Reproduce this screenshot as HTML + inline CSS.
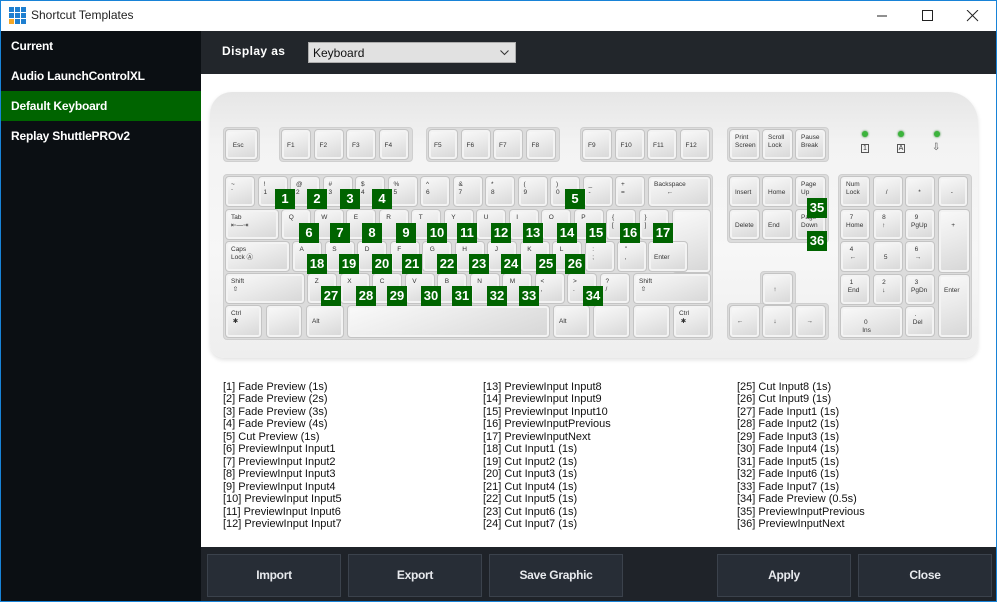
<!DOCTYPE html>
<html><head><meta charset="utf-8"><style>
*{margin:0;padding:0;box-sizing:border-box}
body{width:997px;height:602px;overflow:hidden;position:relative;font-family:"Liberation Sans",Arial,sans-serif;background:#fff}
.abs{position:absolute}
#win{position:absolute;left:0;top:0;width:997px;height:602px;border:1px solid #1883d7;pointer-events:none;z-index:50}
#title{left:0;top:0;width:997px;height:31px;background:#fff}
#side{left:0;top:31px;width:201px;height:571px;background:#0b0f13}
.si{position:absolute;left:0;width:201px;height:30px;color:#fff;font-weight:bold;font-size:12px;line-height:30px;padding-left:11px;letter-spacing:-0.2px}
#topbar{left:201px;top:31px;width:796px;height:43px;background:#22262b}
#content{left:201px;top:74px;width:796px;height:473px;background:#fff}
#bottom{left:201px;top:547px;width:796px;height:55px;background:#1f2329}
.btn{position:absolute;top:554px;width:134px;height:43px;background:#272d36;border:1px solid #3b424c;color:#e8eaee;font-weight:bold;font-size:12px;text-align:center;line-height:41px;letter-spacing:-0.3px}
#kb{left:210px;top:92px;width:768px;height:266px;border-radius:22px 30px 14px 14px;background:linear-gradient(#e6e6e6 0%,#f3f3f3 20%,#f7f7f7 60%,#eeeeee 100%);box-shadow:0 2px 4px rgba(0,0,0,.12)}
.grp{position:absolute;background:#dcdcdc;border-radius:4px;border:1px solid #cfcfcf}
.k{position:absolute;border-radius:4px;background:linear-gradient(160deg,#fafafa 0%,#ebebeb 45%,#d6d6d6 100%);border:1px solid #c4c4c4;box-shadow:inset 0 0 0 2px #f3f3f3;font-size:6.5px;color:#333;padding:4px 0 0 5px;line-height:8px;white-space:pre}
.n{position:absolute;width:20px;height:20px;background:#006400;color:#fff;font-weight:bold;font-size:13px;text-align:center;line-height:20px;z-index:5}
.list{position:absolute;top:381px;font-size:11px;line-height:12.45px;color:#111;white-space:pre}
.led{position:absolute;width:6px;height:6px;border-radius:50%;background:#3cb43c;box-shadow:0 0 2px #1a7a1a}
</style></head><body>
<div id="win"></div>
<div id="title" class="abs">
 <svg class="abs" style="left:9px;top:7px" width="17" height="17">
  <rect x="0" y="0" width="5" height="5" fill="#1e7fd0"/><rect x="6" y="0" width="5" height="5" fill="#1e7fd0"/><rect x="12" y="0" width="5" height="5" fill="#1e7fd0"/>
  <rect x="0" y="6" width="5" height="5" fill="#1e7fd0"/><rect x="6" y="6" width="5" height="5" fill="#1e7fd0"/><rect x="12" y="6" width="5" height="5" fill="#1e7fd0"/>
  <rect x="0" y="12" width="5" height="5" fill="#f5a623"/><rect x="6" y="12" width="5" height="5" fill="#1e7fd0"/><rect x="12" y="12" width="5" height="5" fill="#1e7fd0"/>
 </svg>
 <div class="abs" style="left:31px;top:8px;font-size:12px;color:#222">Shortcut Templates</div>
 <svg class="abs" style="left:877px;top:10px" width="110" height="12">
  <line x1="0" y1="6" x2="10" y2="6" stroke="#222"/>
  <rect x="45.5" y="0.5" width="10" height="10" fill="none" stroke="#222"/>
  <line x1="90" y1="0" x2="101" y2="11" stroke="#222"/><line x1="101" y1="0" x2="90" y2="11" stroke="#222"/>
 </svg>
</div>
<div id="side" class="abs">
 <div class="si" style="top:0">Current</div>
 <div class="si" style="top:30px">Audio LaunchControlXL</div>
 <div class="si" style="top:60px;background:#006400">Default Keyboard</div>
 <div class="si" style="top:90px">Replay ShuttlePROv2</div>
</div>
<div id="topbar" class="abs">
 <div class="abs" style="left:21px;top:13px;color:#fff;font-weight:bold;font-size:12px;letter-spacing:0.4px">Display as</div>
 <div class="abs" style="left:107px;top:11px;width:208px;height:21px;background:#e1e1e1;border:1px solid #adadad;font-size:12px;color:#111;padding:3px 0 0 4px">Keyboard
  <svg class="abs" style="right:6px;top:7px" width="9" height="6"><polyline points="0.5,0.5 4.5,4.5 8.5,0.5" fill="none" stroke="#333"/></svg></div>
</div>
<div id="content" class="abs"></div>
<div id="kb" class="abs"></div>
<div id="keys"></div>
<div class="led" style="left:862px;top:131px"></div><div class="led" style="left:898px;top:131px"></div><div class="led" style="left:934px;top:131px"></div>
<div class="abs" style="left:861px;top:144px;width:8px;height:9px;border:1px solid #555;font-size:7px;line-height:7px;text-align:center;color:#333">1</div>
<div class="abs" style="left:897px;top:144px;width:8px;height:9px;border:1px solid #555;font-size:7px;line-height:7px;text-align:center;color:#333">A</div>
<div class="abs" style="left:932px;top:142px;font-size:10px;color:#555">⇩</div>

<div class="list" style="left:223px">[1] Fade Preview (1s)
[2] Fade Preview (2s)
[3] Fade Preview (3s)
[4] Fade Preview (4s)
[5] Cut Preview (1s)
[6] PreviewInput Input1
[7] PreviewInput Input2
[8] PreviewInput Input3
[9] PreviewInput Input4
[10] PreviewInput Input5
[11] PreviewInput Input6
[12] PreviewInput Input7</div>
<div class="list" style="left:483px">[13] PreviewInput Input8
[14] PreviewInput Input9
[15] PreviewInput Input10
[16] PreviewInputPrevious
[17] PreviewInputNext
[18] Cut Input1 (1s)
[19] Cut Input2 (1s)
[20] Cut Input3 (1s)
[21] Cut Input4 (1s)
[22] Cut Input5 (1s)
[23] Cut Input6 (1s)
[24] Cut Input7 (1s)</div>
<div class="list" style="left:737px">[25] Cut Input8 (1s)
[26] Cut Input9 (1s)
[27] Fade Input1 (1s)
[28] Fade Input2 (1s)
[29] Fade Input3 (1s)
[30] Fade Input4 (1s)
[31] Fade Input5 (1s)
[32] Fade Input6 (1s)
[33] Fade Input7 (1s)
[34] Fade Preview (0.5s)
[35] PreviewInputPrevious
[36] PreviewInputNext</div>

<div id="bottom" class="abs"></div>
<div class="btn" style="left:207px">Import</div>
<div class="btn" style="left:348px">Export</div>
<div class="btn" style="left:489px">Save Graphic</div>
<div class="btn" style="left:717px">Apply</div>
<div class="btn" style="left:858px">Close</div>

<script>
var K=document.getElementById('keys'),h='';
function g(x,y,w,hh){h+='<div class="grp" style="left:'+(x-2)+'px;top:'+(y-2)+'px;width:'+(w+4)+'px;height:'+(hh+4)+'px"></div>';}
function k(x,y,w,hh,t,st){h+='<div class="k" style="left:'+x+'px;top:'+y+'px;width:'+w+'px;height:'+hh+'px;'+(st||'')+'">'+(t||'')+'</div>';}
var U=32.5,W=30,H=31;
// groups
g(225,129,33,H);g(281,129,130,H);g(428,129,130,H);g(582,129,129,H);
g(225,176,486,162);g(729,129,98,H);g(729,176,98,65);g(762,273,32,32);g(729,305,98,33);g(840,176,130,162);
k(225,129,33,H,'\n Esc');
['F1','F2','F3','F4'].forEach(function(t,i){k(281+i*U,129,W,H,'\n'+t)});
['F5','F6','F7','F8'].forEach(function(t,i){k(428+i*U,129,W,H,'\n'+t)});
['F9','F10','F11','F12'].forEach(function(t,i){k(582+i*U,129,W,H,'\n'+t)});
var r1=['~\n`','!\n1','@\n2','#\n3','$\n4','%\n5','^\n6','&\n7','*\n8','(\n9',')\n0','_\n-','+\n='];
r1.forEach(function(t,i){k(225+i*U,176,W,H,t)});
k(648,176,63,H,'Backspace\n       ←');
k(225,209,54,H,'Tab\n⇤—⇥');
'Q W E R T Y U I O P { }'.split(' ').forEach(function(t,i){k(281+i*U,209,W,H,(t=='{'?'{\n[':t=='}'?'}\n]':' '+t))});
k(672,209,39,64,'');
k(225,241,65,H,'Caps\nLock Ⓐ');
'A S D F G H J K L : "'.split(' ').forEach(function(t,i){k(292+i*U,241,W,H,t==':'?' :\n ;':t=='"'?' "\n ,':' '+t)});
k(648,241,40,H,'\nEnter');
k(225,273,80,H,'Shift\n ⇧');
'Z X C V B N M < > ?'.split(' ').forEach(function(t,i){k(307+i*U,273,W,H,t=='<'?'<\n,':t=='>'?'>\n.':t=='?'?'?\n/':' '+t)});
k(633,273,78,H,'Shift\n ⇧');
k(225,305,37,33,'Ctrl\n ✱');k(266,305,36,33,'');k(306,305,38,33,'\nAlt');k(347,305,203,33,'');
k(553,305,37,33,'\nAlt');k(593,305,37,33,'');k(633,305,37,33,'');k(673,305,38,33,'Ctrl\n ✱');
[['Print\nScreen'],['Scroll\nLock'],['Pause\nBreak']].forEach(function(t,i){k(729+i*33,129,31,H,t[0])});
['\nInsert','\nHome','Page\nUp'].forEach(function(t,i){k(729+i*33,176,31,H,t)});
['\nDelete','\nEnd','Page\nDown'].forEach(function(t,i){k(729+i*33,209,31,H,t)});
k(762,273,31,32,'\n   ↑');
k(729,305,31,33,'\n ←');k(762,305,31,33,'\n   ↓');k(795,305,31,33,'\n   →');
var np=[['Num\nLock',0,0],['\n    /',1,0],['\n    *',2,0],['\n    -',3,0],['  7\nHome',0,1],['  8\n  ↑',1,1],['  9\nPgUp',2,1],['  4\n  ←',0,2],['\n   5',1,2],['  6\n  →',2,2],['  1\n End',0,3],['  2\n  ↓',1,3],['  3\nPgDn',2,3],['  .\n Del',2,4]];
np.forEach(function(a){k(840+a[1]*32.5,176+a[2]*32.5,30,31,a[0])});
k(938,208.5,32,64,'\n    +');k(938,273.5,32,64,'\nEnter');k(840,306,63,32,'\n          0\n         Ins');
var N=[[1,275,189],[2,307,189],[3,340,189],[4,372,189],[5,565,189],
[6,299,223],[7,330,223],[8,362,223],[9,396,223],[10,427,223],[11,457,223],[12,491,223],[13,523,223],[14,557,223],[15,586,223],[16,620,223],[17,653,223],
[18,307,254],[19,339,254],[20,372,254],[21,402,254],[22,437,254],[23,469,254],[24,501,254],[25,536,254],[26,565,254],
[27,321,286],[28,356,286],[29,387,286],[30,421,286],[31,452,286],[32,487,286],[33,519,286],[34,583,286],[35,807,198],[36,807,231]];
N.forEach(function(a){h+='<div class="n" style="left:'+a[1]+'px;top:'+a[2]+'px">'+a[0]+'</div>'});
K.innerHTML=h;
</script>
</body></html>
